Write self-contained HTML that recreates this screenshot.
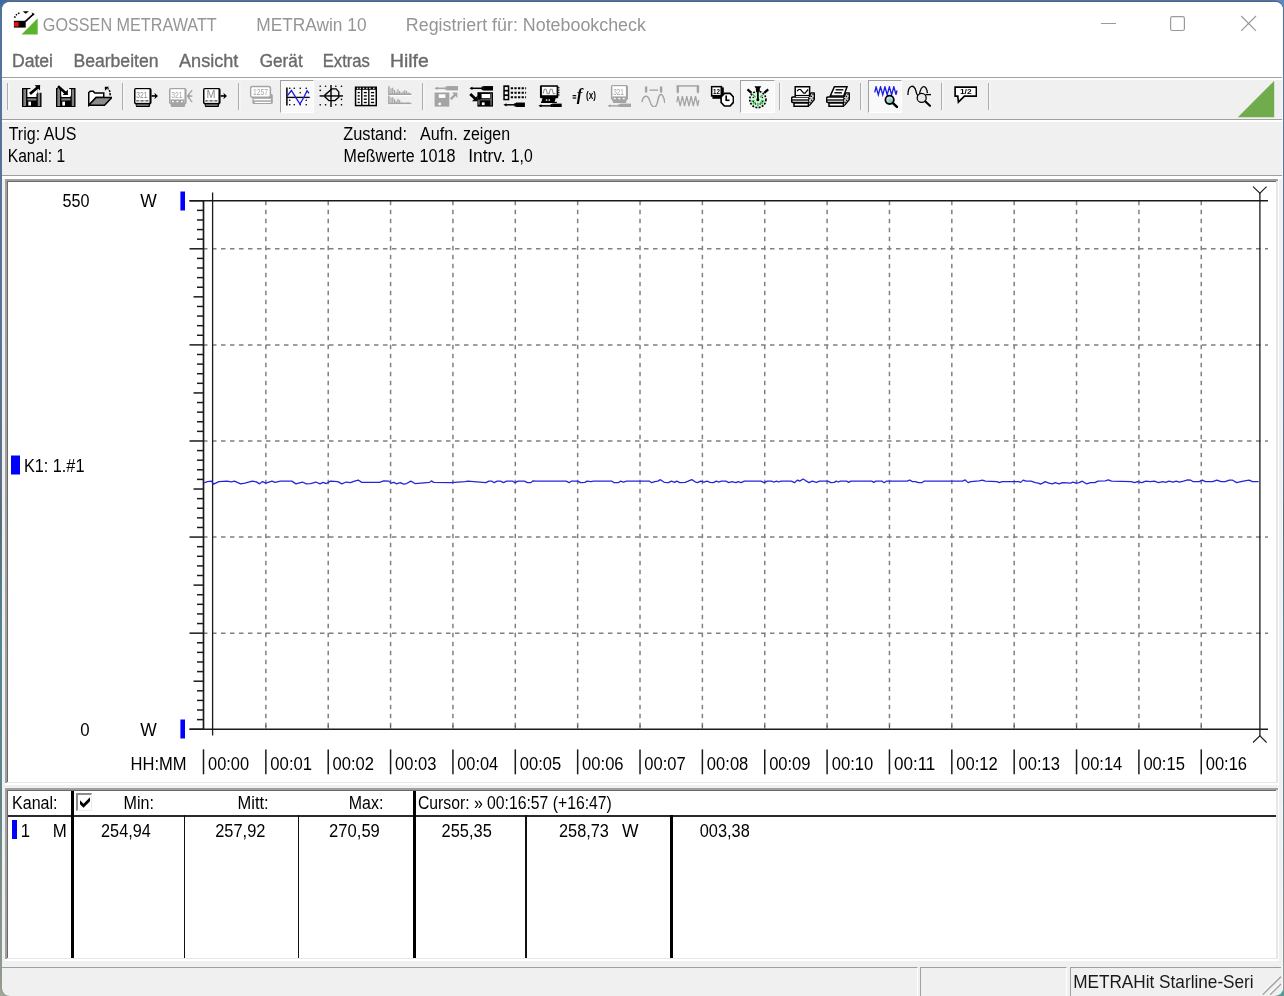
<!DOCTYPE html>
<html lang="de">
<head>
<meta charset="utf-8">
<title>GOSSEN METRAWATT METRAwin 10</title>
<style>
html,body{margin:0;padding:0;}
body{width:1284px;height:996px;overflow:hidden;position:relative;
 background:linear-gradient(180deg,#4470a6 0px,#4a6f9e 60px,#5b6f8c 400px,#4f8890 600px,#8f978c 900px,#a3aa9e 996px);
 font-family:'Liberation Sans',sans-serif;}
#win{position:absolute;left:0;top:0;width:1284px;height:996px;box-sizing:border-box;
 border-radius:10px 10px 9px 9px;overflow:hidden;
 background:linear-gradient(180deg,#54719c 0px,#54719c 1px,#4b6589 1px,#4b6589 2px,#52739c 2.5px,#52739c 40px,#55749a 300px,#5d6f88 470px,#566d77 520px,#4f8791 640px,#5f8488 800px,#7f8f89 900px,#959c90 996px);}
#inner{position:absolute;left:2px;top:2px;width:1281px;height:994px;border-radius:8px;overflow:hidden;background:#f0f0f0;}
#shift{position:absolute;left:-2px;top:-2px;width:1284px;height:996px;}
.abs{position:absolute;}
.t{position:absolute;left:0;white-space:pre;line-height:1;transform-origin:0 0;font-family:'Liberation Sans',sans-serif;}
.blur{filter:blur(0.35px);}
.ga{filter:blur(0.12px);}
.menu{filter:blur(0.5px);-webkit-text-stroke:0.35px #6a6a6a;}
#white{left:2px;top:2px;width:1280px;height:75px;background:#fff;}
.hl{position:absolute;left:2px;width:1280px;height:1.5px;}
svg{position:absolute;left:0;top:0;overflow:visible;}
.gd{stroke:#808080;stroke-width:1.5;stroke-dasharray:4.5 4.5;}
.ax{stroke:#1a1a1a;stroke-width:1.5;}
.frame{position:absolute;box-sizing:border-box;background:#fff;}
.sp{position:absolute;top:967px;height:29px;box-sizing:border-box;border-top:1.5px solid #a0a0a0;border-left:1.5px solid #a0a0a0;border-right:1.5px solid #fff;}
.ic{position:absolute;overflow:hidden;filter:blur(0.3px);}
.tsep{position:absolute;top:82.5px;width:1.3px;height:27.5px;background:#adadad;box-shadow:1.4px 0 0 #fafafa;}
.tpress{position:absolute;top:80px;width:34.5px;height:33px;box-sizing:border-box;background:#f9f9f9;border-top:1.5px solid #a0a0a0;border-left:1.5px solid #a0a0a0;border-right:1.5px solid #fff;border-bottom:1.5px solid #fff;}
</style>
</head>
<body>
<div class="abs" style="left:0;top:0;width:12px;height:12px;background:#3d6aa5"></div>
<div class="abs" style="left:1272px;top:0;width:12px;height:12px;background:#5a8ac4"></div>
<div class="abs" style="left:0;top:984px;width:12px;height:12px;background:#a0a89a"></div>
<div class="abs" style="left:1272px;top:984px;width:12px;height:12px;background:#5a9a94"></div>
<div id="win">
<div id="inner"><div id="shift">
 <div class="abs" id="white"></div>
 <!-- menu bottom / toolbar top -->
 <div class="hl" style="top:76.5px;background:#a0a0a0"></div>
 <div class="hl" style="top:78px;background:#fff"></div>
 <!-- toolbar bottom -->
 <div class="hl" style="top:118.5px;background:#a0a0a0"></div>
 <div class="hl" style="top:120px;background:#fff"></div>
 <!-- info bottom -->
 <div class="hl" style="top:174.5px;background:#a0a0a0"></div>
 <div class="hl" style="top:176px;background:#fff;height:3px"></div>
 <!-- graph frame -->
 <div class="frame" style="left:5px;top:179px;width:1274px;height:605.7px;background:#fff;"></div>
 <div class="frame" style="left:5px;top:179px;width:1272.5px;height:604.2px;background:#a0a0a0;"></div>
 <div class="frame" style="left:6.5px;top:180.5px;width:1271px;height:602.7px;background:#e6e6e6;"></div>
 <div class="frame" style="left:6.5px;top:180.5px;width:1269.5px;height:601.2px;background:#696969;"></div>
 <div class="frame" style="left:8px;top:182px;width:1268px;height:599.7px;background:#fff;"></div>
 <!-- table frame -->
 <div class="frame" style="left:5px;top:788px;width:1274px;height:172.7px;background:#fff;"></div>
 <div class="frame" style="left:5px;top:788px;width:1272.5px;height:171.2px;background:#a0a0a0;"></div>
 <div class="frame" style="left:6.5px;top:789.5px;width:1271px;height:169.7px;background:#e6e6e6;"></div>
 <div class="frame" style="left:6.5px;top:789.5px;width:1269.5px;height:168.2px;background:#696969;"></div>
 <div class="frame" style="left:8px;top:791px;width:1268px;height:166.7px;background:#fff;"></div>
 <!-- table lines -->
 <div class="abs" style="left:8px;top:815px;width:1268px;height:1.6px;background:#2a2a2a"></div>
 <div class="abs" style="left:71px;top:791px;width:3px;height:167px;background:#000"></div>
 <div class="abs" style="left:413px;top:791px;width:3px;height:167px;background:#000"></div>
 <div class="abs" style="left:670px;top:815px;width:3px;height:143px;background:#000"></div>
 <div class="abs" style="left:183.5px;top:815px;width:1.5px;height:143px;background:#111"></div>
 <div class="abs" style="left:297.5px;top:815px;width:1.5px;height:143px;background:#111"></div>
 <div class="abs" style="left:525px;top:815px;width:1.5px;height:143px;background:#111"></div>
 <div class="abs" style="left:12.4px;top:819.6px;width:4.6px;height:19px;background:#0000ff"></div>
 <!-- checkbox -->
 <div class="abs" style="left:75.5px;top:793px;width:16.5px;height:17.5px;box-sizing:border-box;background:#fff;border-top:2.5px solid #8c8c8c;border-left:2.5px solid #8c8c8c;border-right:1.5px solid #ececec;border-bottom:1.5px solid #ececec;"></div>
 <svg class="abs" style="left:0;top:0;filter:blur(0.3px)" width="1284" height="996"><polygon points="80,800.3 83.5,803.8 90,797.3 90,801.3 83.5,807.8 80,804.3" fill="#000"/></svg>
 <!-- status bar -->
  <div class="sp" style="left:2px;width:915.5px;border-left:none"></div>
 <div class="sp" style="left:920px;width:147px;"></div>
 <div class="sp" style="left:1070px;width:211px;border-right:none"></div>
 <svg width="1284" height="996" viewBox="0 0 1284 996" style="filter:blur(0.25px)">
<line x1="265.86" y1="200.75" x2="265.86" y2="729.25" class="gd"/>
<line x1="328.22" y1="200.75" x2="328.22" y2="729.25" class="gd"/>
<line x1="390.58" y1="200.75" x2="390.58" y2="729.25" class="gd"/>
<line x1="452.94" y1="200.75" x2="452.94" y2="729.25" class="gd"/>
<line x1="515.30" y1="200.75" x2="515.30" y2="729.25" class="gd"/>
<line x1="577.66" y1="200.75" x2="577.66" y2="729.25" class="gd"/>
<line x1="640.02" y1="200.75" x2="640.02" y2="729.25" class="gd"/>
<line x1="702.38" y1="200.75" x2="702.38" y2="729.25" class="gd"/>
<line x1="764.74" y1="200.75" x2="764.74" y2="729.25" class="gd"/>
<line x1="827.10" y1="200.75" x2="827.10" y2="729.25" class="gd"/>
<line x1="889.46" y1="200.75" x2="889.46" y2="729.25" class="gd"/>
<line x1="951.82" y1="200.75" x2="951.82" y2="729.25" class="gd"/>
<line x1="1014.18" y1="200.75" x2="1014.18" y2="729.25" class="gd"/>
<line x1="1076.54" y1="200.75" x2="1076.54" y2="729.25" class="gd"/>
<line x1="1138.90" y1="200.75" x2="1138.90" y2="729.25" class="gd"/>
<line x1="1201.26" y1="200.75" x2="1201.26" y2="729.25" class="gd"/>
<line x1="203.00" y1="633.16" x2="1268.00" y2="633.16" class="gd"/>
<line x1="203.00" y1="537.07" x2="1268.00" y2="537.07" class="gd"/>
<line x1="203.00" y1="440.98" x2="1268.00" y2="440.98" class="gd"/>
<line x1="203.00" y1="344.89" x2="1268.00" y2="344.89" class="gd"/>
<line x1="203.00" y1="248.80" x2="1268.00" y2="248.80" class="gd"/>
<line x1="189.50" y1="729.25" x2="203.50" y2="729.25" class="ax"/>
<line x1="197.00" y1="719.64" x2="203.50" y2="719.64" class="ax"/>
<line x1="197.00" y1="710.03" x2="203.50" y2="710.03" class="ax"/>
<line x1="197.00" y1="700.42" x2="203.50" y2="700.42" class="ax"/>
<line x1="197.00" y1="690.81" x2="203.50" y2="690.81" class="ax"/>
<line x1="193.50" y1="681.20" x2="203.50" y2="681.20" class="ax"/>
<line x1="197.00" y1="671.60" x2="203.50" y2="671.60" class="ax"/>
<line x1="197.00" y1="661.99" x2="203.50" y2="661.99" class="ax"/>
<line x1="197.00" y1="652.38" x2="203.50" y2="652.38" class="ax"/>
<line x1="197.00" y1="642.77" x2="203.50" y2="642.77" class="ax"/>
<line x1="189.50" y1="633.16" x2="203.50" y2="633.16" class="ax"/>
<line x1="197.00" y1="623.55" x2="203.50" y2="623.55" class="ax"/>
<line x1="197.00" y1="613.94" x2="203.50" y2="613.94" class="ax"/>
<line x1="197.00" y1="604.33" x2="203.50" y2="604.33" class="ax"/>
<line x1="197.00" y1="594.72" x2="203.50" y2="594.72" class="ax"/>
<line x1="193.50" y1="585.11" x2="203.50" y2="585.11" class="ax"/>
<line x1="197.00" y1="575.50" x2="203.50" y2="575.50" class="ax"/>
<line x1="197.00" y1="565.90" x2="203.50" y2="565.90" class="ax"/>
<line x1="197.00" y1="556.29" x2="203.50" y2="556.29" class="ax"/>
<line x1="197.00" y1="546.68" x2="203.50" y2="546.68" class="ax"/>
<line x1="189.50" y1="537.07" x2="203.50" y2="537.07" class="ax"/>
<line x1="197.00" y1="527.46" x2="203.50" y2="527.46" class="ax"/>
<line x1="197.00" y1="517.85" x2="203.50" y2="517.85" class="ax"/>
<line x1="197.00" y1="508.24" x2="203.50" y2="508.24" class="ax"/>
<line x1="197.00" y1="498.63" x2="203.50" y2="498.63" class="ax"/>
<line x1="193.50" y1="489.02" x2="203.50" y2="489.02" class="ax"/>
<line x1="197.00" y1="479.41" x2="203.50" y2="479.41" class="ax"/>
<line x1="197.00" y1="469.80" x2="203.50" y2="469.80" class="ax"/>
<line x1="197.00" y1="460.20" x2="203.50" y2="460.20" class="ax"/>
<line x1="197.00" y1="450.59" x2="203.50" y2="450.59" class="ax"/>
<line x1="189.50" y1="440.98" x2="203.50" y2="440.98" class="ax"/>
<line x1="197.00" y1="431.37" x2="203.50" y2="431.37" class="ax"/>
<line x1="197.00" y1="421.76" x2="203.50" y2="421.76" class="ax"/>
<line x1="197.00" y1="412.15" x2="203.50" y2="412.15" class="ax"/>
<line x1="197.00" y1="402.54" x2="203.50" y2="402.54" class="ax"/>
<line x1="193.50" y1="392.93" x2="203.50" y2="392.93" class="ax"/>
<line x1="197.00" y1="383.32" x2="203.50" y2="383.32" class="ax"/>
<line x1="197.00" y1="373.71" x2="203.50" y2="373.71" class="ax"/>
<line x1="197.00" y1="364.10" x2="203.50" y2="364.10" class="ax"/>
<line x1="197.00" y1="354.50" x2="203.50" y2="354.50" class="ax"/>
<line x1="189.50" y1="344.89" x2="203.50" y2="344.89" class="ax"/>
<line x1="197.00" y1="335.28" x2="203.50" y2="335.28" class="ax"/>
<line x1="197.00" y1="325.67" x2="203.50" y2="325.67" class="ax"/>
<line x1="197.00" y1="316.06" x2="203.50" y2="316.06" class="ax"/>
<line x1="197.00" y1="306.45" x2="203.50" y2="306.45" class="ax"/>
<line x1="193.50" y1="296.84" x2="203.50" y2="296.84" class="ax"/>
<line x1="197.00" y1="287.23" x2="203.50" y2="287.23" class="ax"/>
<line x1="197.00" y1="277.62" x2="203.50" y2="277.62" class="ax"/>
<line x1="197.00" y1="268.01" x2="203.50" y2="268.01" class="ax"/>
<line x1="197.00" y1="258.40" x2="203.50" y2="258.40" class="ax"/>
<line x1="189.50" y1="248.80" x2="203.50" y2="248.80" class="ax"/>
<line x1="197.00" y1="239.19" x2="203.50" y2="239.19" class="ax"/>
<line x1="197.00" y1="229.58" x2="203.50" y2="229.58" class="ax"/>
<line x1="197.00" y1="219.97" x2="203.50" y2="219.97" class="ax"/>
<line x1="197.00" y1="210.36" x2="203.50" y2="210.36" class="ax"/>
<line x1="189.50" y1="200.75" x2="203.50" y2="200.75" class="ax"/>
<line x1="203.50" y1="200.75" x2="203.50" y2="729.25" class="ax" style="stroke-width:1.7"/>
<line x1="189.5" y1="200.75" x2="1268" y2="200.75" class="ax"/>
<line x1="189.5" y1="729.25" x2="1268" y2="729.25" class="ax"/>
<line x1="265.86" y1="725.25" x2="265.86" y2="729.25" class="ax" style="stroke:#555;stroke-width:1"/>
<line x1="328.22" y1="725.25" x2="328.22" y2="729.25" class="ax" style="stroke:#555;stroke-width:1"/>
<line x1="390.58" y1="725.25" x2="390.58" y2="729.25" class="ax" style="stroke:#555;stroke-width:1"/>
<line x1="452.94" y1="725.25" x2="452.94" y2="729.25" class="ax" style="stroke:#555;stroke-width:1"/>
<line x1="515.30" y1="725.25" x2="515.30" y2="729.25" class="ax" style="stroke:#555;stroke-width:1"/>
<line x1="577.66" y1="725.25" x2="577.66" y2="729.25" class="ax" style="stroke:#555;stroke-width:1"/>
<line x1="640.02" y1="725.25" x2="640.02" y2="729.25" class="ax" style="stroke:#555;stroke-width:1"/>
<line x1="702.38" y1="725.25" x2="702.38" y2="729.25" class="ax" style="stroke:#555;stroke-width:1"/>
<line x1="764.74" y1="725.25" x2="764.74" y2="729.25" class="ax" style="stroke:#555;stroke-width:1"/>
<line x1="827.10" y1="725.25" x2="827.10" y2="729.25" class="ax" style="stroke:#555;stroke-width:1"/>
<line x1="889.46" y1="725.25" x2="889.46" y2="729.25" class="ax" style="stroke:#555;stroke-width:1"/>
<line x1="951.82" y1="725.25" x2="951.82" y2="729.25" class="ax" style="stroke:#555;stroke-width:1"/>
<line x1="1014.18" y1="725.25" x2="1014.18" y2="729.25" class="ax" style="stroke:#555;stroke-width:1"/>
<line x1="1076.54" y1="725.25" x2="1076.54" y2="729.25" class="ax" style="stroke:#555;stroke-width:1"/>
<line x1="1138.90" y1="725.25" x2="1138.90" y2="729.25" class="ax" style="stroke:#555;stroke-width:1"/>
<line x1="1201.26" y1="725.25" x2="1201.26" y2="729.25" class="ax" style="stroke:#555;stroke-width:1"/>
<line x1="212.6" y1="192.5" x2="212.6" y2="735.5" class="ax" style="stroke-width:1.3"/>
<line x1="1259.9" y1="193" x2="1259.9" y2="736" class="ax" style="stroke-width:1.3"/>
<polyline points="1253,186.6 1259.9,193.2 1266.6,186.6" class="ax" fill="none" style="stroke-width:1.1"/>
<polyline points="1253,742.5 1259.9,735.8 1266.6,742.5" class="ax" fill="none" style="stroke-width:1.1"/>
<line x1="203.50" y1="749.4" x2="203.50" y2="774.3" class="ax"/>
<line x1="265.86" y1="749.4" x2="265.86" y2="774.3" class="ax"/>
<line x1="328.22" y1="749.4" x2="328.22" y2="774.3" class="ax"/>
<line x1="390.58" y1="749.4" x2="390.58" y2="774.3" class="ax"/>
<line x1="452.94" y1="749.4" x2="452.94" y2="774.3" class="ax"/>
<line x1="515.30" y1="749.4" x2="515.30" y2="774.3" class="ax"/>
<line x1="577.66" y1="749.4" x2="577.66" y2="774.3" class="ax"/>
<line x1="640.02" y1="749.4" x2="640.02" y2="774.3" class="ax"/>
<line x1="702.38" y1="749.4" x2="702.38" y2="774.3" class="ax"/>
<line x1="764.74" y1="749.4" x2="764.74" y2="774.3" class="ax"/>
<line x1="827.10" y1="749.4" x2="827.10" y2="774.3" class="ax"/>
<line x1="889.46" y1="749.4" x2="889.46" y2="774.3" class="ax"/>
<line x1="951.82" y1="749.4" x2="951.82" y2="774.3" class="ax"/>
<line x1="1014.18" y1="749.4" x2="1014.18" y2="774.3" class="ax"/>
<line x1="1076.54" y1="749.4" x2="1076.54" y2="774.3" class="ax"/>
<line x1="1138.90" y1="749.4" x2="1138.90" y2="774.3" class="ax"/>
<line x1="1201.26" y1="749.4" x2="1201.26" y2="774.3" class="ax"/>
<rect x="180.4" y="191.5" width="4.6" height="19" fill="#0000ff"/>
<rect x="180.4" y="719.5" width="4.6" height="19" fill="#0000ff"/>
<rect x="11" y="455.5" width="9" height="19" fill="#0000ff"/>
<polyline points="203.8,483.0 207.3,481.60 211.5,481.15 213.6,484.15 218.8,481.60 227.1,481.15 231.3,481.90 234.4,481.15 240.7,483.85 244.9,483.10 252.2,481.15 256.4,481.90 259.5,483.85 262.6,481.60 265.7,483.10 272.0,481.15 275.1,482.35 280.4,481.15 291.8,481.15 296.0,483.85 302.3,482.05 306.4,483.85 310.6,483.55 315.8,482.05 320.0,483.85 323.1,482.35 326.3,483.55 330.5,481.15 337.8,481.60 341.9,483.85 346.1,482.05 350.3,482.65 355.5,480.85 358.2,480.09 361.8,482.35 379.5,482.35 383.7,480.85 388.9,481.15 391.0,483.10 394.1,482.35 396.2,483.85 400.4,482.65 403.5,484.15 406.6,483.55 410.8,481.15 415.0,483.55 429.6,482.35 431.3,480.85 433.8,482.35 450.5,482.65 465.1,481.60 468.0,481.15 485.7,482.65 488.9,481.15 492.0,481.15 494.1,482.65 497.2,481.15 500.4,481.15 503.5,482.65 506.6,481.15 512.9,481.15 515.0,482.65 518.1,481.15 524.4,481.15 527.5,482.65 530.6,482.65 533.1,480.85 535.8,481.15 566.1,481.15 569.2,482.65 571.3,481.15 577.6,481.15 580.7,482.65 584.9,482.35 587.0,481.15 591.1,481.60 593.2,481.15 612.0,481.15 614.1,482.65 618.3,482.65 620.4,481.15 623.5,482.05 626.6,481.15 649.6,481.15 651.7,482.65 654.8,481.60 657.9,481.15 660.4,479.64 664.2,482.35 668.4,482.65 671.5,481.15 674.6,482.35 676.7,481.15 679.9,482.65 685.1,482.35 688.2,481.15 691.8,479.64 695.5,482.05 697.6,482.65 700.7,481.15 703.9,482.05 707.0,481.15 710.1,482.35 713.2,482.65 716.4,481.15 718.5,482.05 721.6,481.15 725.8,481.15 728.9,482.65 732.0,481.60 736.0,482.65 738.1,481.60 741.2,482.65 744.3,481.15 761.0,481.15 764.2,482.65 767.3,481.15 771.5,481.15 773.6,482.05 776.7,481.15 778.8,482.05 780.9,481.15 791.3,481.15 794.4,482.65 797.6,480.09 799.7,481.15 803.2,479.04 805.9,480.85 809.1,482.65 812.2,481.15 816.4,482.35 819.5,481.15 827.8,481.15 831.0,482.65 834.1,482.35 836.2,481.15 838.3,482.05 840.4,481.15 846.6,481.15 848.7,482.35 850.8,481.15 871.7,481.15 873.8,482.35 875.8,481.15 882.1,481.15 884.2,482.65 886.3,481.15 907.2,481.15 909.7,479.94 912.4,481.60 915.5,481.60 918.6,482.65 921.8,482.65 923.9,481.15 962.5,481.15 965.2,479.94 968.1,482.65 970.8,481.60 979.2,480.85 982.3,480.09 985.4,481.15 996.9,481.60 999.4,482.65 1002.1,481.60 1004.0,481.60 1018.6,481.60 1020.7,482.35 1023.2,480.09 1025.9,481.15 1031.1,481.15 1035.3,482.65 1038.4,483.10 1040.5,484.15 1042.6,483.10 1045.1,481.60 1048.9,483.10 1052.4,483.85 1055.1,482.65 1059.3,483.85 1062.4,482.65 1070.8,483.10 1072.9,482.05 1076.0,483.10 1079.1,482.65 1082.3,481.15 1086.4,483.85 1090.6,482.65 1094.8,482.65 1097.9,481.15 1105.2,480.85 1108.4,479.94 1111.5,481.15 1131.3,481.60 1134.5,482.65 1137.6,481.60 1141.8,482.65 1145.9,481.15 1150.1,481.60 1154.3,481.15 1158.5,482.65 1162.6,481.60 1165.8,482.35 1168.9,481.15 1173.1,482.05 1176.2,481.15 1179.3,482.05 1183.5,481.15 1187.7,479.94 1190.8,480.24 1192.9,481.60 1199.2,481.60 1202.3,480.09 1205.4,481.60 1212.7,481.60 1216.9,480.09 1221.1,481.60 1225.2,481.60 1229.4,480.09 1232.6,480.24 1236.7,482.65 1240.9,481.60 1246.1,480.55 1249.2,480.09 1252.4,481.60 1258.6,481.60" fill="none" stroke="#2424dc" stroke-width="1.25" stroke-linejoin="round"/>
 </svg>
 <!-- app icon -->
 <svg class="abs" style="left:0;top:0" width="60" height="46" viewBox="0 0 60 46">
  <polygon points="21.5,34.5 37.7,34.5 37.7,18.3" fill="#5cb32e"/>
  <rect x="13.9" y="20.8" width="11.8" height="6.8" fill="#000"/>
  <rect x="14.2" y="22.1" width="4.4" height="4.5" fill="#e8101f"/>
  <line x1="25.2" y1="21.6" x2="33.4" y2="14.2" stroke="#000" stroke-width="1.6"/>
  <polygon points="31.6,12.6 34.8,14 33,15.6" fill="#000"/>
  <path d="M14.6,17.8 Q15.6,14.4 19.4,13" fill="none" stroke="#000" stroke-width="1.5" stroke-dasharray="1.6 1.2"/>
  <polygon points="22.9,11.2 29,11.2 25.6,13.8" fill="#000"/>
 </svg>
 <!-- caption buttons -->
 <svg class="abs" style="left:1090px;top:8px" width="180" height="32" viewBox="1090 8 180 32">
  <line x1="1101" y1="23.5" x2="1116" y2="23.5" stroke="#9a9a9a" stroke-width="1.2"/>
  <rect x="1170.6" y="16.7" width="13.8" height="13.8" rx="1.8" fill="none" stroke="#9a9a9a" stroke-width="1.2"/>
  <path d="M1241.2,16 L1256,30.8 M1256,16 L1241.2,30.8" stroke="#9a9a9a" stroke-width="1.2" fill="none"/>
 </svg>
 <!-- green triangle in toolbar -->
 <svg class="abs" style="left:1230px;top:78px" width="50" height="42" viewBox="1230 78 50 42">
  <polygon points="1237.8,117.3 1274.2,117.3 1274.2,80.9" fill="#70ab4c"/>
 </svg>
 <!-- resize grip -->
 <svg class="abs" style="left:1258px;top:970px" width="24" height="26" viewBox="1258 970 24 26">
  <g stroke="#fff" stroke-width="1.5"><line x1="1261" y1="994.7" x2="1279.5" y2="976.6"/><line x1="1268.5" y1="994.7" x2="1279.5" y2="984"/></g>
  <g stroke="#a6a6a6" stroke-width="1.5"><line x1="1262.5" y1="994.7" x2="1281" y2="976.6"/><line x1="1270" y1="994.7" x2="1281" y2="984"/></g>
 </svg>
<div class="tsep" style="left:6.5px"></div>
<svg class="ic" style="left:18.5px;top:84.5px" width="24" height="22.5" viewBox="0 0 16 15"><rect x="2" y="2" width="13" height="12.8" fill="#000"/><rect x="2.9" y="2.8" width="11.2" height="11.2" fill="#808080"/><rect x="4.7" y="2" width="7.8" height="12.8" fill="#000"/><rect x="5.6" y="2.8" width="6" height="5.2" fill="#fff"/><rect x="5.6" y="8.9" width="6" height="1.4" fill="#808080"/><rect x="6.2" y="11.1" width="1.8" height="2.6" fill="#fff"/><polygon points="7.6,1 16,1 16,5.2 12.2,5.2 12.2,2.8 7.6,2.8" fill="#f0f0f0" stroke="none" stroke-width="1" /><rect x="7.6" y="2.8" width="4.4" height="3" fill="#fff"/><line x1="7.3" y1="5.9" x2="12.4" y2="1.7" stroke="#000" stroke-width="1.8" /><polygon points="10.4,0.2 14.1,0 14,3.7" fill="#000" stroke="none" stroke-width="1" /></svg>
<svg class="ic" style="left:53px;top:84.5px" width="24" height="22.5" viewBox="0 0 16 15"><rect x="2" y="2" width="13" height="12.8" fill="#000"/><rect x="2.9" y="2.8" width="11.2" height="11.2" fill="#808080"/><rect x="4.7" y="2" width="7.8" height="12.8" fill="#000"/><rect x="5.6" y="2.8" width="6" height="5.2" fill="#fff"/><rect x="5.6" y="8.9" width="6" height="1.4" fill="#808080"/><rect x="6.2" y="11.1" width="1.8" height="2.6" fill="#fff"/><polygon points="3.2,0 10.8,0 10.8,2.8 3.2,2.8" fill="#f0f0f0" stroke="none" stroke-width="1" /><rect x="5.6" y="2.8" width="6.4" height="4.4" fill="#fff"/><line x1="3.3" y1="0.8" x2="8.4" y2="5.4" stroke="#000" stroke-width="1.8" /><polygon points="6.4,6.7 9.9,6.7 9.9,3" fill="#000" stroke="none" stroke-width="1" /></svg>
<svg class="ic" style="left:87.5px;top:84.5px" width="24" height="22.5" viewBox="0 0 16 15"><path d="M0.5,13.5 L0.5,5 L1.5,4.2 L3.5,4.2 L4.5,5.4 L10.5,5.4 L10.5,8.3 L5.4,8.3Z" fill="#fff" stroke="#000" stroke-width="1" /><polygon points="5.4,8.3 15.9,8.3 11,13.5 0.5,13.5" fill="#8a8a8a" stroke="#000" stroke-width="1" /><path d="M14.7,6.9 Q15,3.2 13,2.4" fill="none" stroke="#000" stroke-width="1" stroke-dasharray="1.4 0.7"/><polygon points="11.2,1.2 14.1,1.2 11.3,3.8" fill="#000" stroke="none" stroke-width="1" /></svg>
<div class="tsep" style="left:122px"></div>
<svg class="ic" style="left:134px;top:84.5px" width="24" height="22.5" viewBox="0 0 16 15"><rect x="0" y="2" width="11.7" height="10.9" rx="1.2" fill="#000"/><polygon points="1,12.6 10.9,12.6 10.4,14.8 1.4,14.8" fill="#000" stroke="none" stroke-width="1" /><rect x="1" y="2.8" width="9.3" height="9.1" fill="#fff"/><rect x="1" y="10.1" width="9.3" height="0.9" fill="#b8b8b8"/><rect x="1.7" y="12.9" width="8.1" height="1" fill="#808080"/><rect x="1.6" y="10.2" width="1.5" height="0.7" fill="#505050"/><rect x="4.7" y="10.2" width="1.5" height="0.7" fill="#505050"/><rect x="7.8" y="10.2" width="1.5" height="0.7" fill="#505050"/><text x="5.25" y="8.4" font-size="6.6" fill="#8c8c8c" font-family="Liberation Sans, sans-serif" text-anchor="middle" textLength="7.5" lengthAdjust="spacingAndGlyphs">321</text><line x1="11.7" y1="7.3" x2="14.7" y2="7.3" stroke="#000" stroke-width="1.1" /><polygon points="16,7.3 13.6,5.1 14.2,7.3 13.6,9.5" fill="#000" stroke="none" stroke-width="1" /></svg>
<svg class="ic" style="left:168.5px;top:84.5px" width="24" height="22.5" viewBox="0 0 16 15"><rect x="0" y="2" width="11.7" height="10.9" rx="1.2" fill="#a4a4a4"/><polygon points="1,12.6 10.9,12.6 10.4,14.8 1.4,14.8" fill="#a4a4a4" stroke="none" stroke-width="1" /><rect x="1" y="2.8" width="9.3" height="9.1" fill="#fff"/><rect x="1" y="9.6" width="9.3" height="2.8" fill="#a4a4a4"/><rect x="2" y="10.6" width="1.2" height="0.9" fill="#fff"/><rect x="5" y="10.6" width="1.2" height="0.9" fill="#fff"/><rect x="8" y="10.6" width="1.2" height="0.9" fill="#fff"/><text x="5.25" y="8.4" font-size="6.6" fill="#a4a4a4" font-family="Liberation Sans, sans-serif" text-anchor="middle" textLength="7.5" lengthAdjust="spacingAndGlyphs">321</text><line x1="12" y1="7.4" x2="15.6" y2="7.4" stroke="#a4a4a4" stroke-width="1" /><line x1="12.3" y1="7.4" x2="15.4" y2="3.4" stroke="#a4a4a4" stroke-width="0.9" /><line x1="12.3" y1="7.4" x2="15.4" y2="11.4" stroke="#a4a4a4" stroke-width="0.9" /><polygon points="12,7.4 13.8,6 13.8,8.8" fill="#a4a4a4" stroke="none" stroke-width="1" /></svg>
<svg class="ic" style="left:203px;top:84.5px" width="24" height="22.5" viewBox="0 0 16 15"><rect x="0" y="2" width="11.7" height="10.9" rx="1.2" fill="#000"/><polygon points="1,12.6 10.9,12.6 10.4,14.8 1.4,14.8" fill="#000" stroke="none" stroke-width="1" /><rect x="1" y="2.8" width="9.3" height="9.1" fill="#fff"/><rect x="1" y="10.1" width="9.3" height="0.9" fill="#b8b8b8"/><rect x="1.7" y="12.9" width="8.1" height="1" fill="#808080"/><rect x="1.6" y="10.2" width="1.5" height="0.7" fill="#505050"/><rect x="4.7" y="10.2" width="1.5" height="0.7" fill="#505050"/><rect x="7.8" y="10.2" width="1.5" height="0.7" fill="#505050"/><text x="5.35" y="8.7" font-size="7.2" fill="#8c8c8c" font-family="Liberation Sans, sans-serif" text-anchor="middle">M</text><line x1="11.7" y1="7.3" x2="14.7" y2="7.3" stroke="#000" stroke-width="1.1" /><polygon points="16,7.3 13.6,5.1 14.2,7.3 13.6,9.5" fill="#000" stroke="none" stroke-width="1" /></svg>
<div class="tsep" style="left:237.5px"></div>
<svg class="ic" style="left:249.5px;top:84.5px" width="24" height="22.5" viewBox="0 0 16 15"><rect x="1.6" y="6" width="13.6" height="6.6" rx="1" fill="#a4a4a4"/><rect x="2.4" y="9.2" width="11.6" height="1" fill="#fff"/><rect x="3.2" y="11.2" width="10.8" height="0.8" fill="#fff"/><rect x="0.4" y="1" width="13.2" height="7.2" rx="1.2" fill="#fff" stroke="#a4a4a4" stroke-width="1"/><text x="7" y="6.7" font-size="5.6" fill="#a4a4a4" font-family="Liberation Sans, sans-serif" text-anchor="middle" textLength="10" lengthAdjust="spacingAndGlyphs">1257</text></svg>
<div class="tpress" style="left:279.5px"></div>
<svg class="ic" style="left:285.5px;top:86px" width="24" height="22.5" viewBox="0 0 16 15"><circle cx="2.5" cy="1.5" r="0.55" fill="#000" stroke="none" stroke-width="0" /><circle cx="5.5" cy="1.5" r="0.55" fill="#000" stroke="none" stroke-width="0" /><circle cx="9.5" cy="1.5" r="0.55" fill="#000" stroke="none" stroke-width="0" /><circle cx="13.5" cy="1.5" r="0.55" fill="#000" stroke="none" stroke-width="0" /><circle cx="2.5" cy="12.5" r="0.55" fill="#000" stroke="none" stroke-width="0" /><circle cx="5.5" cy="12.5" r="0.55" fill="#000" stroke="none" stroke-width="0" /><circle cx="9.5" cy="12.5" r="0.55" fill="#000" stroke="none" stroke-width="0" /><circle cx="13.5" cy="12.5" r="0.55" fill="#000" stroke="none" stroke-width="0" /><circle cx="9.5" cy="4.5" r="0.55" fill="#000" stroke="none" stroke-width="0" /><circle cx="2.5" cy="9.5" r="0.55" fill="#000" stroke="none" stroke-width="0" /><circle cx="13.5" cy="9.5" r="0.55" fill="#000" stroke="none" stroke-width="0" /><line x1="0.6" y1="1" x2="0.6" y2="13" stroke="#000" stroke-width="1" /><line x1="0.6" y1="7.6" x2="15.8" y2="7.6" stroke="#000" stroke-width="0.9" /><polyline points="0.8,6.6 3.6,3 6.5,7.6 9.3,12 12.2,7 14,3.2 15.3,4.8" fill="none" stroke="#1f1fe0" stroke-width="0.9" /></svg>
<svg class="ic" style="left:318.5px;top:84.5px" width="24" height="22.5" viewBox="0 0 16 15"><circle cx="0.8" cy="0.8" r="0.55" fill="#000" stroke="none" stroke-width="0" /><circle cx="4.4" cy="0.8" r="0.55" fill="#000" stroke="none" stroke-width="0" /><circle cx="11.2" cy="0.8" r="0.55" fill="#000" stroke="none" stroke-width="0" /><circle cx="15" cy="0.8" r="0.55" fill="#000" stroke="none" stroke-width="0" /><circle cx="0.8" cy="13.2" r="0.55" fill="#000" stroke="none" stroke-width="0" /><circle cx="4.4" cy="13.2" r="0.55" fill="#000" stroke="none" stroke-width="0" /><circle cx="11.2" cy="13.2" r="0.55" fill="#000" stroke="none" stroke-width="0" /><circle cx="15" cy="13.2" r="0.55" fill="#000" stroke="none" stroke-width="0" /><circle cx="0.8" cy="3.6" r="0.55" fill="#000" stroke="none" stroke-width="0" /><circle cx="15" cy="9.6" r="0.55" fill="#000" stroke="none" stroke-width="0" /><line x1="8" y1="0" x2="8" y2="14.6" stroke="#000" stroke-width="0.95" /><line x1="0.4" y1="7.3" x2="16" y2="7.3" stroke="#000" stroke-width="0.95" /><polygon points="8.6,2.6 11.4,2.6 13.2,4.6 13.2,8.2 10.6,10.4 6.6,10.4 4,8 4,6.6" fill="none" stroke="#000" stroke-width="0.9" /></svg>
<svg class="ic" style="left:353px;top:84.5px" width="24" height="22.5" viewBox="0 0 16 15"><rect x="1.2" y="1" width="15" height="13.2" fill="#000"/><rect x="2.2" y="3.2" width="3.2" height="10" fill="#fff"/><rect x="3.1" y="4.6" width="1.4" height="0.9" fill="#000"/><rect x="3.1" y="6.8" width="1.4" height="0.9" fill="#000"/><rect x="3.1" y="9" width="1.4" height="0.9" fill="#000"/><rect x="3.1" y="11.2" width="1.4" height="0.9" fill="#000"/><rect x="6.3" y="3.2" width="3.8" height="10" fill="#fff"/><rect x="7.2" y="4.6" width="2" height="0.9" fill="#000"/><rect x="7.2" y="6.8" width="2" height="0.9" fill="#000"/><rect x="7.2" y="9" width="2" height="0.9" fill="#000"/><rect x="7.2" y="11.2" width="2" height="0.9" fill="#000"/><rect x="11" y="3.2" width="4" height="10" fill="#fff"/><rect x="11.9" y="4.6" width="2.2" height="0.9" fill="#000"/><rect x="11.9" y="6.8" width="2.2" height="0.9" fill="#000"/><rect x="11.9" y="9" width="2.2" height="0.9" fill="#000"/><rect x="11.9" y="11.2" width="2.2" height="0.9" fill="#000"/><rect x="2.6" y="1.8" width="0.9" height="0.8" fill="#fff"/><rect x="4.4" y="1.8" width="0.9" height="0.8" fill="#fff"/><rect x="6.6" y="1.8" width="0.9" height="0.8" fill="#fff"/><rect x="8.8" y="1.8" width="0.9" height="0.8" fill="#fff"/><rect x="10.8" y="1.8" width="0.9" height="0.8" fill="#fff"/><rect x="13.4" y="1.8" width="0.9" height="0.8" fill="#fff"/></svg>
<svg class="ic" style="left:387.5px;top:84.5px" width="24" height="22.5" viewBox="0 0 16 15"><line x1="0.6" y1="0.8" x2="0.6" y2="6.2" stroke="#a4a4a4" stroke-width="1" /><line x1="0.2" y1="6.2" x2="15.6" y2="6.2" stroke="#a4a4a4" stroke-width="1" /><rect x="1.6" y="2.2" width="0.8" height="4" fill="#a4a4a4"/><rect x="2.75" y="1.8" width="0.8" height="4.4" fill="#a4a4a4"/><rect x="3.9" y="3.2" width="0.8" height="3" fill="#a4a4a4"/><rect x="5.05" y="4.6" width="0.8" height="1.6" fill="#a4a4a4"/><rect x="6.2" y="2.8" width="0.8" height="3.4" fill="#a4a4a4"/><rect x="7.35" y="4" width="0.8" height="2.2" fill="#a4a4a4"/><rect x="8.5" y="5" width="0.8" height="1.2" fill="#a4a4a4"/><rect x="9.65" y="4.2" width="0.8" height="2" fill="#a4a4a4"/><rect x="10.8" y="3.4" width="0.8" height="2.8" fill="#a4a4a4"/><rect x="11.95" y="4" width="0.8" height="2.2" fill="#a4a4a4"/><rect x="13.1" y="5" width="0.8" height="1.2" fill="#a4a4a4"/><rect x="14.25" y="5.4" width="0.8" height="0.8" fill="#a4a4a4"/><line x1="0.2" y1="7.1" x2="15.6" y2="7.1" stroke="#fff" stroke-width="0.7" /><line x1="0.6" y1="7" x2="0.6" y2="12.4" stroke="#a4a4a4" stroke-width="1" /><line x1="0.2" y1="12.4" x2="15.6" y2="12.4" stroke="#a4a4a4" stroke-width="1" /><rect x="1.6" y="8.4" width="0.8" height="4" fill="#a4a4a4"/><rect x="2.75" y="8.2" width="0.8" height="4.2" fill="#a4a4a4"/><rect x="3.9" y="9.4" width="0.8" height="3" fill="#a4a4a4"/><rect x="5.05" y="10.6" width="0.8" height="1.8" fill="#a4a4a4"/><rect x="6.2" y="9.2" width="0.8" height="3.2" fill="#a4a4a4"/><rect x="7.35" y="10" width="0.8" height="2.4" fill="#a4a4a4"/><rect x="8.5" y="11.4" width="0.8" height="1" fill="#a4a4a4"/><rect x="9.65" y="11.6" width="0.8" height="0.8" fill="#a4a4a4"/><rect x="10.8" y="11.8" width="0.8" height="0.6" fill="#a4a4a4"/><rect x="11.95" y="11.5" width="0.8" height="0.9" fill="#a4a4a4"/><rect x="13.1" y="11.4" width="0.8" height="1" fill="#a4a4a4"/><rect x="14.25" y="11.9" width="0.8" height="0.5" fill="#a4a4a4"/><line x1="0.2" y1="13.3" x2="15.6" y2="13.3" stroke="#fff" stroke-width="0.7" /></svg>
<div class="tsep" style="left:422px"></div>
<svg class="ic" style="left:434px;top:84.5px" width="24" height="22.5" viewBox="0 0 16 15"><line x1="1.3" y1="2.2" x2="8.5" y2="2.2" stroke="#a4a4a4" stroke-width="1" /><polygon points="0.3,2.2 2.3,1.1 2.3,3.3" fill="#a4a4a4" stroke="none" stroke-width="1" /><rect x="7.5" y="1" width="1" height="2.4" fill="#a4a4a4"/><rect x="8.5" y="0.7" width="7.5" height="3" fill="#a4a4a4"/><rect x="0.4" y="5" width="9.8" height="9.4" fill="#a4a4a4"/><rect x="3.2" y="6.2" width="4.4" height="2.4" fill="#fff"/><rect x="3" y="11.8" width="1.6" height="1.6" fill="#fff"/><line x1="11.2" y1="9.4" x2="14.6" y2="6" stroke="#a4a4a4" stroke-width="1.6" /><polygon points="12,5 15.6,5 15.6,8.6" fill="#a4a4a4" stroke="none" stroke-width="1" /><line x1="0" y1="4.2" x2="16" y2="4.2" stroke="#fff" stroke-width="0.6" /></svg>
<svg class="ic" style="left:468.5px;top:84.5px" width="24" height="22.5" viewBox="0 0 16 15"><line x1="1.3" y1="2.2" x2="9.4" y2="2.2" stroke="#000" stroke-width="1" /><polygon points="0.3,2.2 2.3,1.1 2.3,3.3" fill="#000" stroke="none" stroke-width="1" /><rect x="8.4" y="1" width="1" height="2.4" fill="#000"/><rect x="9.4" y="0.7" width="6.6" height="3" fill="#000"/><rect x="5.6" y="4.8" width="10.4" height="9.6" fill="#000"/><rect x="6.6" y="5.8" width="8.4" height="7.6" fill="#000"/><rect x="8.4" y="6" width="5.6" height="2.8" fill="#fff"/><rect x="14.3" y="5.6" width="0.8" height="8" fill="#808080"/><rect x="6.2" y="9.8" width="0.9" height="3.4" fill="#808080"/><rect x="8.6" y="11.6" width="1.8" height="1.8" fill="#fff"/><rect x="7.4" y="9.6" width="7.6" height="0.6" fill="#808080"/><line x1="0.8" y1="6" x2="4.2" y2="9.2" stroke="#000" stroke-width="1.9" /><polygon points="2,10.8 5.8,10.8 5.8,7" fill="#000" stroke="none" stroke-width="1" /></svg>
<svg class="ic" style="left:503px;top:84.5px" width="24" height="22.5" viewBox="0 0 16 15"><rect x="0.2" y="0.2" width="4" height="10" fill="#000"/><rect x="1.2" y="1.4" width="2" height="1.8" fill="#fff"/><rect x="1.2" y="4.4" width="2" height="1.8" fill="#fff"/><rect x="1.2" y="7.4" width="2" height="1.8" fill="#fff"/><line x1="5.2" y1="2.2" x2="15.4" y2="2.2" stroke="#000" stroke-width="1.3" stroke-dasharray="1.5 0.9"/><line x1="5.2" y1="5.2" x2="15.4" y2="5.2" stroke="#000" stroke-width="1.3" stroke-dasharray="1.5 0.9"/><line x1="5.2" y1="8.2" x2="15.4" y2="8.2" stroke="#000" stroke-width="1.3" stroke-dasharray="1.5 0.9"/><line x1="1.3" y1="13.2" x2="8.6" y2="13.2" stroke="#000" stroke-width="1" /><polygon points="0.3,13.2 2.3,12.1 2.3,14.3" fill="#000" stroke="none" stroke-width="1" /><rect x="7.6" y="12" width="1" height="2.4" fill="#000"/><rect x="8.6" y="11.7" width="6" height="3" fill="#000"/></svg>
<svg class="ic" style="left:537.5px;top:84.5px" width="24" height="22.5" viewBox="0 0 16 15"><rect x="1.3" y="0.2" width="12.2" height="8.6" rx="0.8" fill="#000"/><rect x="2.6" y="1.2" width="9.8" height="5.6" fill="#fff"/><polyline points="3.4,5.8 4.2,2.8 5.4,2.8 6.2,5.8 7.4,5.8 8.2,2.8 9.4,2.8 10.2,5.8 11.6,5.8" fill="none" stroke="#909090" stroke-width="0.7" /><rect x="13.4" y="1.4" width="0.9" height="0.8" fill="#000"/><rect x="13.4" y="3" width="0.9" height="0.8" fill="#000"/><rect x="13.4" y="4.6" width="0.9" height="0.8" fill="#000"/><rect x="13.4" y="6.2" width="0.9" height="0.8" fill="#000"/><polygon points="3,8.6 11.8,8.6 11,11.6 2.2,11.6" fill="#000" stroke="none" stroke-width="1" /><rect x="5.2" y="9.6" width="1" height="0.9" fill="#fff"/><rect x="7" y="9.6" width="1" height="0.9" fill="#fff"/><rect x="2" y="11.2" width="10.6" height="0.8" fill="#000"/><line x1="1.3" y1="13.9" x2="9.4" y2="13.9" stroke="#000" stroke-width="1" /><polygon points="0.3,13.9 2.3,12.8 2.3,15" fill="#000" stroke="none" stroke-width="1" /><rect x="8.4" y="12.7" width="1" height="2.4" fill="#000"/><rect x="9.4" y="12.4" width="6.4" height="3" fill="#000"/></svg>
<svg class="ic" style="left:572px;top:84.5px" width="24" height="22.5" viewBox="0 0 16 15"><rect x="0.4" y="6.7" width="2.4" height="0.8" fill="#000"/><rect x="0.4" y="8.3" width="2.4" height="0.8" fill="#000"/><text x="3.1" y="10.0" font-size="11" font-style="italic" font-weight="bold" font-family="Liberation Serif, serif" fill="#000">f</text><text x="9.4" y="9.5" font-size="7.4" fill="#000" font-family="Liberation Sans, sans-serif" font-weight="bold" textLength="6.6" lengthAdjust="spacingAndGlyphs">(x)</text></svg>
<svg class="ic" style="left:606.5px;top:84.5px" width="24" height="22.5" viewBox="0 0 16 15"><rect x="2.6" y="0" width="11.4" height="10.1" rx="1.2" fill="#a4a4a4"/><polygon points="3.6,9.8 13.2,9.8 12.7,12 4,12" fill="#a4a4a4" stroke="none" stroke-width="1" /><rect x="3.6" y="0.8" width="9" height="8.3" fill="#fff"/><rect x="3.6" y="7.6" width="9" height="2.8" fill="#a4a4a4"/><rect x="4.6" y="8.6" width="1.2" height="0.9" fill="#fff"/><rect x="7.6" y="8.6" width="1.2" height="0.9" fill="#fff"/><rect x="10.6" y="8.6" width="1.2" height="0.9" fill="#fff"/><text x="7.7" y="6.4" font-size="6.6" fill="#a4a4a4" font-family="Liberation Sans, sans-serif" text-anchor="middle" textLength="7.2" lengthAdjust="spacingAndGlyphs">321</text><line x1="1.4" y1="13.9" x2="8.6" y2="13.9" stroke="#a4a4a4" stroke-width="1" /><polygon points="0.4,13.9 2.4,12.8 2.4,15" fill="#a4a4a4" stroke="none" stroke-width="1" /><rect x="7.6" y="12.7" width="1" height="2.4" fill="#a4a4a4"/><rect x="8.6" y="12.4" width="7.4" height="3" fill="#a4a4a4"/></svg>
<svg class="ic" style="left:641px;top:84.5px" width="24" height="22.5" viewBox="0 0 16 15"><polygon points="2.6,1 4.2,1 4.2,4.4 3.4,5.6 2.6,4.4" fill="#a4a4a4" stroke="none" stroke-width="1" /><polygon points="12.6,1 14.2,1 14.2,4.4 13.4,5.6 12.6,4.4" fill="#a4a4a4" stroke="none" stroke-width="1" /><line x1="5.6" y1="3.4" x2="11.4" y2="3.4" stroke="#a4a4a4" stroke-width="0.9" /><path d="M0.6,11.4 C1.6,6.4 4.6,6.4 5.8,10.4 S9.8,17.5 11.2,10.4 S15,6.4 16,12" fill="none" stroke="#a4a4a4" stroke-width="1" /></svg>
<svg class="ic" style="left:675.5px;top:84.5px" width="24" height="22.5" viewBox="0 0 16 15"><line x1="0.4" y1="0.6" x2="15.4" y2="0.6" stroke="#a4a4a4" stroke-width="1" /><polygon points="0.4,0.6 2,0.6 2,4.6 1.2,5.8 0.4,4.6" fill="#a4a4a4" stroke="none" stroke-width="1" /><polygon points="13.8,0.6 15.4,0.6 15.4,4.6 14.6,5.8 13.8,4.6" fill="#a4a4a4" stroke="none" stroke-width="1" /><polyline points="0.60,11.4 1.33,7.4 2.79,14 4.25,7.4 5.71,14 7.17,7.4 8.63,14 10.09,7.4 11.55,14 13.01,7.4 14.47,14 15.20,10" fill="none" stroke="#a4a4a4" stroke-width="0.85" /></svg>
<svg class="ic" style="left:710px;top:84.5px" width="24" height="22.5" viewBox="0 0 16 15"><rect x="1.6" y="1.6" width="7.6" height="7.6" fill="#000"/><rect x="0.6" y="0.6" width="7.6" height="7.2" fill="#000"/><rect x="1.6" y="1.6" width="5.4" height="5" fill="#fff"/><text x="4.3" y="6" font-size="5.4" fill="#000" font-family="Liberation Sans, sans-serif" text-anchor="middle" font-weight="bold" textLength="4.6" lengthAdjust="spacingAndGlyphs">12</text><polygon points="9.6,5.6 13.4,5.6 15.6,8 15.6,11.6 13.4,14 9.6,14 7.4,11.6 7.4,8" fill="#fff" stroke="#000" stroke-width="1.1" /><line x1="10.8" y1="7" x2="10.8" y2="10.4" stroke="#000" stroke-width="1.1" /><line x1="10.4" y1="10.2" x2="13" y2="10.2" stroke="#000" stroke-width="1.1" /></svg>
<div class="tpress" style="left:740px"></div>
<svg class="ic" style="left:746px;top:86px" width="24" height="22.5" viewBox="0 0 16 15"><circle cx="7.9" cy="9" r="5.4" fill="#dcf7df" stroke="#000" stroke-width="1.1" stroke-dasharray="1.3 0.9"/><line x1="9.462" y1="10.562" x2="11.095" y2="12.195" stroke="#2fc84a" stroke-width="1" /><line x1="6.338" y1="10.562" x2="4.705" y2="12.195" stroke="#2fc84a" stroke-width="1" /><line x1="9.462" y1="7.438" x2="11.095" y2="5.805" stroke="#2fc84a" stroke-width="1" /><line x1="6.338" y1="7.438" x2="4.705" y2="5.805" stroke="#2fc84a" stroke-width="1" /><line x1="10.034" y1="9.572" x2="12.265" y2="10.17" stroke="#2fc84a" stroke-width="1" /><line x1="5.766" y1="9.572" x2="3.535" y2="10.17" stroke="#2fc84a" stroke-width="1" /><line x1="7.9" y1="11.2" x2="7.9" y2="13.5" stroke="#2fc84a" stroke-width="1" /><circle cx="10.96" cy="7.64" r="0.5" fill="#000" stroke="none" stroke-width="0" /><circle cx="4.84" cy="7.64" r="0.5" fill="#000" stroke="none" stroke-width="0" /><circle cx="10.96" cy="10.53" r="0.5" fill="#000" stroke="none" stroke-width="0" /><circle cx="4.84" cy="10.53" r="0.5" fill="#000" stroke="none" stroke-width="0" /><circle cx="9.43" cy="12.06" r="0.5" fill="#000" stroke="none" stroke-width="0" /><circle cx="6.37" cy="12.06" r="0.5" fill="#000" stroke="none" stroke-width="0" /><polygon points="5.6,0.2 10.2,0.2 9.2,1.6 9.2,3.6 6.6,3.6 6.6,1.6" fill="#000" stroke="none" stroke-width="1" /><line x1="1" y1="2.2" x2="3.6" y2="4.6" stroke="#000" stroke-width="1.5" /><line x1="14.8" y1="2.2" x2="12.2" y2="4.6" stroke="#000" stroke-width="1.5" /><line x1="7.9" y1="3" x2="7.9" y2="9" stroke="#000" stroke-width="1.2" /><circle cx="7.9" cy="9.2" r="1" fill="#000" stroke="none" stroke-width="0" /></svg>
<div class="tsep" style="left:779px"></div>
<svg class="ic" style="left:791px;top:84.5px" width="24" height="22.5" viewBox="0 0 16 15"><path d="M1.4,8 L12,8 L12,11.6 L1.4,11.6 Q0.4,11.6 0.4,10.6 L0.4,9 Q0.4,8 1.4,8Z" fill="#fff" stroke="#000" stroke-width="1" /><line x1="0.6" y1="10" x2="12" y2="10" stroke="#000" stroke-width="0.9" /><path d="M2,12 L11.6,12 L11.6,14.2 L2,14.2Z" fill="#fff" stroke="#000" stroke-width="1" /><path d="M12,8 L13.4,5.2 L15.4,5.2 L15.6,6 L15.6,9.6 L12.2,13.8" fill="#d0d0d0" stroke="#000" stroke-width="0.9" /><line x1="12.2" y1="9.4" x2="15" y2="5.8" stroke="#000" stroke-width="0.8" stroke-dasharray="0.9 0.9"/><line x1="12.4" y1="12" x2="15.4" y2="8" stroke="#000" stroke-width="0.8" stroke-dasharray="0.9 0.9"/><path d="M2.8,8 L2.8,1.2 L12.4,1.2 L12.4,8" fill="#fff" stroke="#000" stroke-width="1" /><line x1="2.8" y1="7" x2="12.4" y2="7" stroke="#000" stroke-width="0.8" /><polyline points="4,4 5.2,3 6.4,3 8.4,5.4 9.4,5.4 11.4,3" fill="none" stroke="#000" stroke-width="0.8" /></svg>
<svg class="ic" style="left:825.5px;top:84.5px" width="24" height="22.5" viewBox="0 0 16 15"><path d="M1.4,8 L12,8 L12,11.6 L1.4,11.6 Q0.4,11.6 0.4,10.6 L0.4,9 Q0.4,8 1.4,8Z" fill="#fff" stroke="#000" stroke-width="1" /><line x1="0.6" y1="10" x2="12" y2="10" stroke="#000" stroke-width="0.9" /><path d="M2,12 L11.6,12 L11.6,14.2 L2,14.2Z" fill="#fff" stroke="#000" stroke-width="1" /><path d="M12,8 L13.4,5.2 L15.4,5.2 L15.6,6 L15.6,9.6 L12.2,13.8" fill="#d0d0d0" stroke="#000" stroke-width="0.9" /><line x1="12.2" y1="9.4" x2="15" y2="5.8" stroke="#000" stroke-width="0.8" stroke-dasharray="0.9 0.9"/><line x1="12.4" y1="12" x2="15.4" y2="8" stroke="#000" stroke-width="0.8" stroke-dasharray="0.9 0.9"/><polygon points="2.8,7.4 5.6,1.2 14,1.2 11.8,7.4" fill="#fff" stroke="#000" stroke-width="1" /><line x1="6.4" y1="3.2" x2="11.6" y2="3.2" stroke="#000" stroke-width="0.9" /><line x1="5.6" y1="5.2" x2="10.6" y2="5.2" stroke="#000" stroke-width="0.9" /></svg>
<div class="tsep" style="left:860px"></div>
<div class="tpress" style="left:867.5px"></div>
<svg class="ic" style="left:873.5px;top:86px" width="24" height="22.5" viewBox="0 0 16 15"><polyline points="0.50,4.2 1.39,0.6 2.87,5.8 4.35,0.6 5.83,5.8 7.31,0.6 8.79,5.8 10.27,0.6 11.75,5.8 13.23,0.6 14.71,5.8 15.30,3" fill="none" stroke="#1f1fe0" stroke-width="0.9" /><defs><radialGradient id="mg" cx="0.6" cy="0.65" r="0.7"><stop offset="0" stop-color="#35e0c8"/><stop offset="0.45" stop-color="#c8d4d4"/><stop offset="1" stop-color="#e8e8e8"/></radialGradient></defs><circle cx="10.4" cy="9.2" r="2.8" fill="url(#mg)" stroke="#000" stroke-width="1.2" /><line x1="12.6" y1="11.4" x2="15.3" y2="13.9" stroke="#000" stroke-width="1.7" stroke-linecap="round"/></svg>
<svg class="ic" style="left:906.5px;top:84.5px" width="24" height="22.5" viewBox="0 0 16 15"><path d="M0.6,6.6 C0.8,-0.6 5,-0.6 6,4.2 C6.6,7 7.6,7.6 8.2,6.6 C9.4,-0.6 13,-0.6 13.6,5.4" fill="none" stroke="#000" stroke-width="0.9" /><line x1="12.4" y1="6.4" x2="16" y2="6.4" stroke="#000" stroke-width="0.9" /><circle cx="9.8" cy="8.6" r="3" fill="#e8e8e8" stroke="#000" stroke-width="0.85" /><line x1="12.1" y1="10.9" x2="15.3" y2="13.9" stroke="#000" stroke-width="1.4" stroke-linecap="round"/></svg>
<div class="tsep" style="left:941px"></div>
<svg class="ic" style="left:953px;top:84.5px" width="24" height="22.5" viewBox="0 0 16 15"><path d="M1.4,1.4 L15.6,1.4 L15.6,7.4 L7.6,7.4 L3.6,11.4 L3.2,7.4 L1.4,7.4Z" fill="#fff" stroke="#000" stroke-width="1.1" /><text x="8.5" y="6.2" font-size="5" fill="#000" font-family="Liberation Sans, sans-serif" text-anchor="middle" font-weight="bold" textLength="7.8" lengthAdjust="spacingAndGlyphs">1/2</text></svg>
<div class="tsep" style="left:987.5px"></div>
<span class="t ga" id="t0" style="top:17px;font-size:17.5px;transform:translate(42.81px,0) scaleX(0.9251);color:#959595;">GOSSEN METRAWATT</span>
<span class="t ga" id="t1" style="top:17px;font-size:17.5px;transform:translate(256.32px,0) scaleX(0.9880);color:#959595;">METRAwin 10</span>
<span class="t ga" id="t2" style="top:17px;font-size:17.5px;transform:translate(405.86px,0) scaleX(1.0195);color:#959595;">Registriert für: Notebookcheck</span>
<span class="t blur menu" id="t3" style="top:53px;font-size:17.5px;transform:translate(11.93px,0) scaleX(1.0059);color:#6a6a6a;">Datei</span>
<span class="t blur menu" id="t4" style="top:53px;font-size:17.5px;transform:translate(73.39px,0) scaleX(1.0057);color:#6a6a6a;">Bearbeiten</span>
<span class="t blur menu" id="t5" style="top:53px;font-size:17.5px;transform:translate(178.97px,0) scaleX(1.0351);color:#6a6a6a;">Ansicht</span>
<span class="t blur menu" id="t6" style="top:53px;font-size:17.5px;transform:translate(259.68px,0) scaleX(0.9818);color:#6a6a6a;">Gerät</span>
<span class="t blur menu" id="t7" style="top:53px;font-size:17.5px;transform:translate(322.75px,0) scaleX(0.9516);color:#6a6a6a;">Extras</span>
<span class="t blur menu" id="t8" style="top:53px;font-size:17.5px;transform:translate(389.98px,0) scaleX(1.1062);color:#6a6a6a;">Hilfe</span>
<span class="t blur" id="t9" style="top:126px;font-size:17.5px;transform:translate(8.67px,0) scaleX(0.9144);color:#000;">Trig: AUS</span>
<span class="t blur" id="t10" style="top:148px;font-size:17.5px;transform:translate(7.76px,0) scaleX(0.8929);color:#000;">Kanal: 1</span>
<span class="t blur" id="t11" style="top:126px;font-size:17.5px;transform:translate(343.18px,0) scaleX(0.9366);color:#000;">Zustand:</span>
<span class="t blur" id="t12" style="top:126px;font-size:17.5px;transform:translate(420.10px,0) scaleX(0.9223);color:#000;">Aufn.</span>
<span class="t blur" id="t13" style="top:126px;font-size:17.5px;transform:translate(463.02px,0) scaleX(0.9116);color:#000;">zeigen</span>
<span class="t blur" id="t14" style="top:148px;font-size:17.5px;transform:translate(343.60px,0) scaleX(0.9140);color:#000;">Meßwerte</span>
<span class="t blur" id="t15" style="top:148px;font-size:17.5px;transform:translate(419.57px,0) scaleX(0.9247);color:#000;">1018</span>
<span class="t blur" id="t16" style="top:148px;font-size:17.5px;transform:translate(468.17px,0) scaleX(0.9941);color:#000;">Intrv.</span>
<span class="t blur" id="t17" style="top:148px;font-size:17.5px;transform:translate(510.80px,0) scaleX(0.8997);color:#000;">1,0</span>
<span class="t blur" id="t18" style="top:193px;font-size:17.5px;transform:translate(62.55px,0) scaleX(0.9233);color:#000;">550</span>
<span class="t blur" id="t19" style="top:193px;font-size:17.5px;transform:translate(140.20px,0) scaleX(1.0000);color:#000;">W</span>
<span class="t blur" id="t20" style="top:722px;font-size:17.5px;transform:translate(80.20px,0) scaleX(0.9600);color:#000;">0</span>
<span class="t blur" id="t21" style="top:722px;font-size:17.5px;transform:translate(140.20px,0) scaleX(1.0000);color:#000;">W</span>
<span class="t blur" id="t22" style="top:458px;font-size:17.5px;transform:translate(23.90px,0) scaleX(0.9288);color:#000;">K1: 1.#1</span>
<span class="t blur" id="t23" style="top:756px;font-size:17.5px;transform:translate(130.53px,0) scaleX(0.9444);color:#000;">HH:MM</span>
<span class="t blur" id="t24" style="top:756px;font-size:17.5px;transform:translate(208.05px,0) scaleX(0.9372);color:#000;">00:00</span>
<span class="t blur" id="t25" style="top:756px;font-size:17.5px;transform:translate(270.35px,0) scaleX(0.9520);color:#000;">00:01</span>
<span class="t blur" id="t26" style="top:756px;font-size:17.5px;transform:translate(332.60px,0) scaleX(0.9461);color:#000;">00:02</span>
<span class="t blur" id="t27" style="top:756px;font-size:17.5px;transform:translate(395.09px,0) scaleX(0.9438);color:#000;">00:03</span>
<span class="t blur" id="t28" style="top:756px;font-size:17.5px;transform:translate(457.21px,0) scaleX(0.9355);color:#000;">00:04</span>
<span class="t blur" id="t29" style="top:756px;font-size:17.5px;transform:translate(519.81px,0) scaleX(0.9439);color:#000;">00:05</span>
<span class="t blur" id="t30" style="top:756px;font-size:17.5px;transform:translate(582.11px,0) scaleX(0.9462);color:#000;">00:06</span>
<span class="t blur" id="t31" style="top:756px;font-size:17.5px;transform:translate(644.29px,0) scaleX(0.9455);color:#000;">00:07</span>
<span class="t blur" id="t32" style="top:756px;font-size:17.5px;transform:translate(706.85px,0) scaleX(0.9467);color:#000;">00:08</span>
<span class="t blur" id="t33" style="top:756px;font-size:17.5px;transform:translate(769.13px,0) scaleX(0.9451);color:#000;">00:09</span>
<span class="t blur" id="t34" style="top:756px;font-size:17.5px;transform:translate(831.72px,0) scaleX(0.9472);color:#000;">00:10</span>
<span class="t blur" id="t35" style="top:756px;font-size:17.5px;transform:translate(893.91px,0) scaleX(0.9751);color:#000;">00:11</span>
<span class="t blur" id="t36" style="top:756px;font-size:17.5px;transform:translate(956.28px,0) scaleX(0.9459);color:#000;">00:12</span>
<span class="t blur" id="t37" style="top:756px;font-size:17.5px;transform:translate(1018.58px,0) scaleX(0.9446);color:#000;">00:13</span>
<span class="t blur" id="t38" style="top:756px;font-size:17.5px;transform:translate(1081.01px,0) scaleX(0.9405);color:#000;">00:14</span>
<span class="t blur" id="t39" style="top:756px;font-size:17.5px;transform:translate(1143.39px,0) scaleX(0.9478);color:#000;">00:15</span>
<span class="t blur" id="t40" style="top:756px;font-size:17.5px;transform:translate(1205.69px,0) scaleX(0.9446);color:#000;">00:16</span>
<span class="t blur" id="t41" style="top:795px;font-size:17.5px;transform:translate(12.01px,0) scaleX(0.9176);color:#000;">Kanal:</span>
<span class="t blur" id="t42" style="top:795px;font-size:17.5px;transform:translate(123.54px,0) scaleX(0.9201);color:#000;">Min:</span>
<span class="t blur" id="t43" style="top:795px;font-size:17.5px;transform:translate(237.55px,0) scaleX(0.9408);color:#000;">Mitt:</span>
<span class="t blur" id="t44" style="top:795px;font-size:17.5px;transform:translate(348.77px,0) scaleX(0.9109);color:#000;">Max:</span>
<span class="t blur" id="t45" style="top:795px;font-size:17.5px;transform:translate(417.93px,0) scaleX(0.8998);color:#000;">Cursor: » 00:16:57 (+16:47)</span>
<span class="t blur" id="t46" style="top:823px;font-size:17.5px;transform:translate(20.71px,0) scaleX(0.9600);color:#000;">1</span>
<span class="t blur" id="t47" style="top:823px;font-size:17.5px;transform:translate(52.66px,0) scaleX(0.9600);color:#000;">M</span>
<span class="t blur" id="t48" style="top:823px;font-size:17.5px;transform:translate(101.07px,0) scaleX(0.9290);color:#000;">254,94</span>
<span class="t blur" id="t49" style="top:823px;font-size:17.5px;transform:translate(215.25px,0) scaleX(0.9375);color:#000;">257,92</span>
<span class="t blur" id="t50" style="top:823px;font-size:17.5px;transform:translate(329.12px,0) scaleX(0.9472);color:#000;">270,59</span>
<span class="t blur" id="t51" style="top:823px;font-size:17.5px;transform:translate(441.62px,0) scaleX(0.9371);color:#000;">255,35</span>
<span class="t blur" id="t52" style="top:823px;font-size:17.5px;transform:translate(559.05px,0) scaleX(0.9304);color:#000;">258,73</span>
<span class="t blur" id="t53" style="top:823px;font-size:17.5px;transform:translate(621.91px,0) scaleX(1.0000);color:#000;">W</span>
<span class="t blur" id="t54" style="top:823px;font-size:17.5px;transform:translate(699.75px,0) scaleX(0.9350);color:#000;">003,38</span>
<span class="t ga" id="t55" style="top:974px;font-size:17.8px;transform:translate(1073.18px,0) scaleX(0.9665);color:#1a1a1a;">METRAHit Starline-Seri</span>
 <div class="abs" style="left:1282px;top:2px;width:1px;height:994px;background:#f4f7fb"></div>
</div></div>
</div>
</body>
</html>
